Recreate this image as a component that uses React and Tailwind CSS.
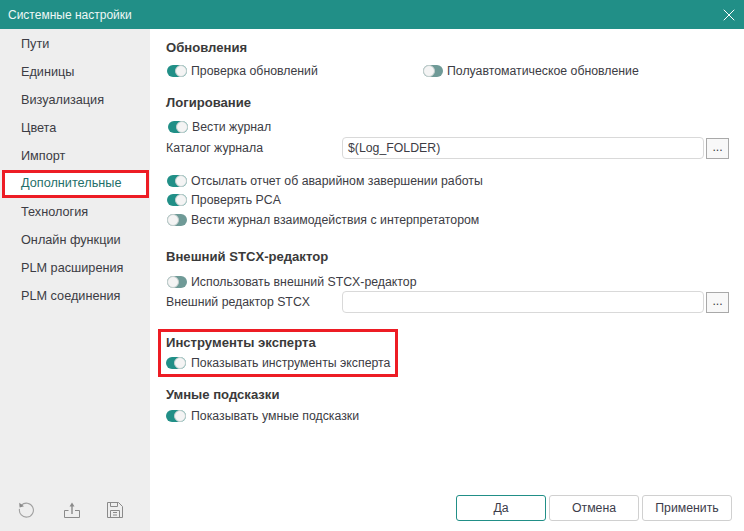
import { X } from "lucide-react";

const menu = ["Пути", "Единицы", "Визуализация", "Цвета", "Импорт", "Дополнительные", "Технология", "Онлайн функции", "PLM расширения", "PLM соединения"];

const Toggle = ({ on = true }) => (
  <span className={`relative inline-block w-[20px] h-[12px] rounded-full shrink-0 ${on ? "bg-[#218f87]" : "bg-[#6f9a97]"}`}>
    <span className={`absolute top-0 w-[12px] h-[12px] rounded-full bg-[#f4f4f4] border border-[#c4cfce] ${on ? "right-0" : "left-0"}`} />
  </span>
);

const Check = ({ label, on = true, className = "" }) => (
  <div className={`flex items-center gap-[4px] h-[20px] whitespace-nowrap ${className}`}>
    <Toggle on={on} />
    <span>{label}</span>
  </div>
);

const Heading = ({ children, className = "" }) => (
  <div className={`h-[20px] leading-[21px] font-bold text-[13.1px] text-[#3a3a3a] ${className}`}>{children}</div>
);

const PathRow = ({ label, value, className = "" }) => (
  <div className={`flex items-center h-[22px] ${className}`}>
    <span className="w-[176px] shrink-0">{label}</span>
    <div className="w-[362px] h-[22px] leading-[21px] px-[5px] border border-[#d9d9d9] rounded-[4px]">{value}</div>
    <div className="ml-[2px] w-[23px] h-[21px] leading-[17px] text-center bg-[#f8f8f8] border border-[#a9a9a9]">...</div>
  </div>
);

const Footer = ({ children, primary }) => (
  <button className={`w-[90px] h-[26px] rounded-[3px] bg-white border text-[#3c3c4a] ${primary ? "border-[#218f87]" : "border-[#d0d0d0]"}`}>
    {children}
  </button>
);

export default function App() {
  return (
    <div className="w-[744px] h-[531px] flex flex-col overflow-hidden bg-white text-[12.3px] text-[#3c3c44] font-['Liberation_Sans',sans-serif]">
      <div className="h-[29px] shrink-0 bg-[#218f87] flex items-center justify-between pl-[8px] pr-[5px] text-[12px] text-[#eef7f6]">
        <span>Системные настройки</span>
        <X size={20} strokeWidth={1} color="#ffffff" absoluteStrokeWidth />
      </div>
      <div className="flex flex-1 min-h-0">
        <aside className="w-[150px] shrink-0 bg-[#eeeeee] flex flex-col">
          <ul className="pt-[1px]">
            {menu.map((item, i) => (
              <li
                key={item}
                className={`h-[28px] text-[12.7px] ${i === 5 ? "ml-[2px] mr-[1px] border-[3px] border-[#ed1c24] bg-white pl-[16px] leading-[21px] text-[#1f6f6a]" : "pl-[21px] leading-[28px]"}`}
              >
                {item}
              </li>
            ))}
          </ul>
          <div className="mt-auto mb-[13px] flex items-center gap-[30px] pl-[18px] text-[#8a8a8a]">
            <svg width="16" height="16" viewBox="0 0 16 16" fill="none" stroke="currentColor" className="text-[#a0a0a0]">
              <path d="M3.4 3.2a7 7 0 1 1-1.9 3.6" strokeWidth="1.1" />
              <path d="M1.2 0.8l.4 4.8 4.4-1.4z" fill="#8a8a8a" stroke="none" />
            </svg>
            <svg width="16" height="16" viewBox="0 0 16 16" fill="none" stroke="currentColor">
              <path d="M4.5 8.5H.5v7h15v-7h-4.5" strokeWidth="1" />
              <path d="M8 12V3" strokeWidth="1.8" className="text-[#a0a0a0]" />
              <path d="M5.5 4.5L8 .5l2.5 4z" fill="currentColor" stroke="none" />
            </svg>
            <svg width="16" height="16" viewBox="0 0 16 16" fill="none" stroke="currentColor" strokeWidth="1" className="-ml-[3px]">
              <path d="M.5.5h11l4 4v11H.5z" />
              <path d="M3.5.5v4h7v-4" />
              <path d="M3.5 15.5v-7h9v7M6 10.5h4M6 13h4" />
            </svg>
          </div>
        </aside>
        <main className="flex-1 min-w-0 flex flex-col pl-[8px]">
          <div className="pl-[9px] pt-[8px]">
            <Heading className="-ml-[1px]">Обновления</Heading>
            <div className="flex mt-[4px]">
              <Check label="Проверка обновлений" className="w-[256px]" />
              <Check label="Полуавтоматическое обновление" on={false} />
            </div>
            <Heading className="mt-[11px] -ml-[1px]">Логирование</Heading>
            <Check label="Вести журнал" className="mt-[5px] ml-[1px]" />
            <PathRow label="Каталог журнала" value="$(Log_FOLDER)" className="-ml-[1px]" />
            <Check label="Отсылать отчет об аварийном завершении работы" className="mt-[12px]" />
            <Check label="Проверять PCA" className="-mt-[1px]" />
            <Check label="Вести журнал взаимодействия с интерпретатором" on={false} />
            <Heading className="mt-[16px] -ml-[1px]">Внешний STCX-редактор</Heading>
            <Check label="Использовать внешний STCX-редактор" on={false} className="mt-[6px]" />
            <PathRow label="Внешний редактор STCX" value="" className="-mt-[1px] -ml-[1px]" />
          </div>
          <div className="mt-[16px] w-[240px] h-[48px] border-[3px] border-[#ed1c24] pl-[5px] pt-[1px]">
            <Heading className="-mt-[1px]">Инструменты эксперта</Heading>
            <Check label="Показывать инструменты эксперта" className="mt-[1px] !gap-[5px]" />
          </div>
          <div className="pl-[8px] mt-[7px]">
            <Heading>Умные подсказки</Heading>
            <Check label="Показывать умные подсказки" className="mt-[2px] !gap-[5px]" />
          </div>
          <div className="mt-auto mb-[10px] mr-[12px] flex justify-end gap-[3px]">
            <Footer primary>Да</Footer>
            <Footer>Отмена</Footer>
            <Footer>Применить</Footer>
          </div>
        </main>
      </div>
    </div>
  );
}
